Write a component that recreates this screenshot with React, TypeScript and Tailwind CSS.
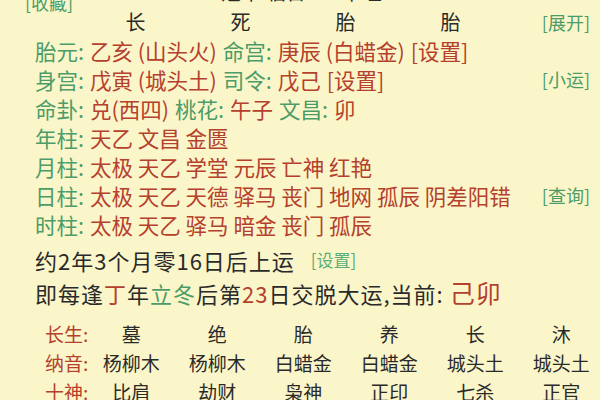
const G = "text-[#4b9c68]";
const R = "text-[#b5402d]";

type Seg = { t: string; c: "g" | "r" };

const rows: { segs: Seg[]; side?: string }[] = [
  {
    segs: [
      { t: "胎元:", c: "g" },
      { t: "乙亥 (山头火)", c: "r" },
      { t: "命宫:", c: "g" },
      { t: "庚辰 (白蜡金)", c: "r" },
      { t: "[设置]", c: "r" },
    ],
  },
  {
    segs: [
      { t: "身宫:", c: "g" },
      { t: "戊寅 (城头土)", c: "r" },
      { t: "司令:", c: "g" },
      { t: "戊己", c: "r" },
      { t: "[设置]", c: "r" },
    ],
    side: "[小运]",
  },
  {
    segs: [
      { t: "命卦:", c: "g" },
      { t: "兑(西四)", c: "r" },
      { t: "桃花:", c: "g" },
      { t: "午子", c: "r" },
      { t: "文昌:", c: "g" },
      { t: "卯", c: "r" },
    ],
  },
  { segs: [{ t: "年柱:", c: "g" }, { t: "天乙 文昌 金匮", c: "r" }] },
  { segs: [{ t: "月柱:", c: "g" }, { t: "太极 天乙 学堂 元辰 亡神 红艳", c: "r" }] },
  {
    segs: [{ t: "日柱:", c: "g" }, { t: "太极 天乙 天德 驿马 丧门 地网 孤辰 阴差阳错", c: "r" }],
    side: "[查询]",
  },
  { segs: [{ t: "时柱:", c: "g" }, { t: "太极 天乙 驿马 暗金 丧门 孤辰", c: "r" }] },
];

const table = [
  { label: "长生:", cells: ["墓", "绝", "胎", "养", "长", "沐"] },
  { label: "纳音:", cells: ["杨柳木", "杨柳木", "白蜡金", "白蜡金", "城头土", "城头土"] },
  { label: "十神:", cells: ["比肩", "劫财", "枭神", "正印", "七杀", "正官"] },
];

export default function App() {
  return (
    <div
      className="w-[600px] h-[400px] overflow-hidden bg-[#fbf6c9] text-[#2a2a2a]"
      style={{ fontFamily: '"Noto Sans CJK SC", "Noto Sans", sans-serif' }}
    >
      {/* cut-off top strip */}
      <div className="flex h-[8px] items-start">
        <span className={`ml-[25px] -mt-[10px] text-[18px] leading-[24px] ${G}`}>[收藏]</span>
        <span className="ml-[148px] -mt-[19px] text-[20px] leading-[22px]">冠带 临官</span>
        <span className="ml-[36px] -mt-[19px] text-[20px] leading-[22px]">帝旺</span>
      </div>

      {/* header */}
      <div className="flex h-[28px] items-center">
        <div className="ml-[83px] grid grid-cols-[105px_105px_105px_105px] text-[20px]">
          <span className="text-center">长</span>
          <span className="text-center">死</span>
          <span className="text-center">胎</span>
          <span className="text-center">胎</span>
        </div>
        <span className={`ml-auto mr-[10px] text-[18px] ${G}`}>[展开]</span>
      </div>

      {/* shensha rows */}
      <div className="flex flex-col">
        {rows.map((row, i) => (
          <div key={i} className="flex h-[29px] items-center pl-[35px] pr-[10px]">
            <div className="flex items-center gap-[6px] text-[21.5px] leading-none whitespace-nowrap">
              {row.segs.map((s, j) => (
                <span key={j} className={s.c === "g" ? G : R}>
                  {s.t}
                </span>
              ))}
            </div>
            {row.side && <span className={`ml-auto text-[18px] ${G}`}>{row.side}</span>}
          </div>
        ))}
      </div>

      {/* luck start */}
      <div className="mt-[5px] flex h-[32px] items-center pl-[35px] text-[22px] tracking-[1px] whitespace-nowrap">
        <span>约2年3个月零16日后上运</span>
        <span className="ml-[16px] text-[17px] tracking-normal text-[#5aae78]">[设置]</span>
      </div>
      <div className="flex h-[34px] items-center pl-[35px] text-[22px] tracking-[1px] whitespace-nowrap">
        <span>即每逢</span>
        <span className={R}>丁</span>
        <span>年</span>
        <span className={G}>立冬</span>
        <span>后第</span>
        <span className={R}>23</span>
        <span>日交脱大运,当前: </span>
        <span className={`ml-[6px] text-[25px] ${R}`}>己卯</span>
      </div>

      {/* table */}
      <div className="mt-[10px] flex flex-col">
        {table.map((r) => (
          <div key={r.label} className="flex h-[29px] items-center text-[19px] whitespace-nowrap">
            <span className={`w-[112px] pl-[45px] ${R}`}>{r.label}</span>
            <div className="grid grid-cols-[86px_86px_86px_86px_86px_86px]">
              {r.cells.map((c, k) => (
                <span key={k} className="text-center">
                  {c}
                </span>
              ))}
            </div>
          </div>
        ))}
      </div>
    </div>
  );
}
